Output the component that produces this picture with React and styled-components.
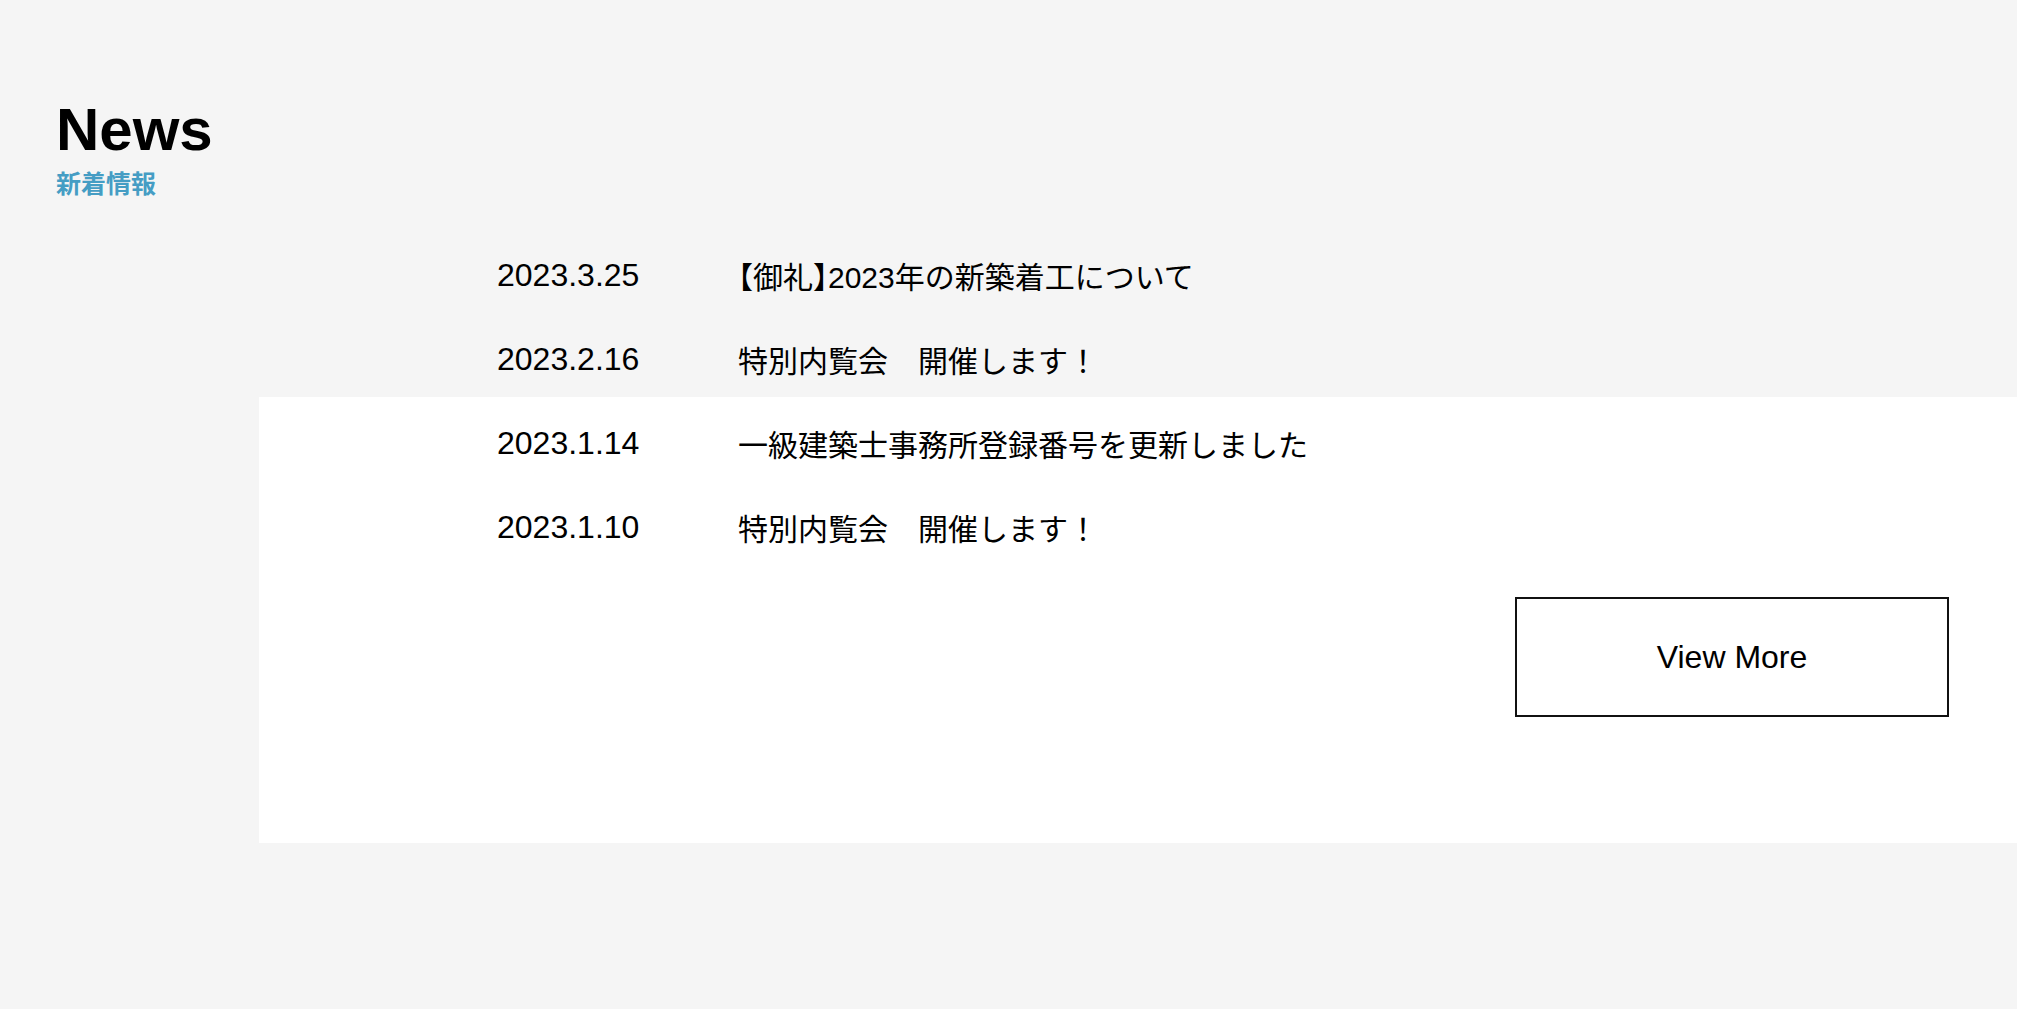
import React from "react";
import styled, { createGlobalStyle } from "styled-components";

const GlobalStyle = createGlobalStyle`
  * { box-sizing: border-box; }
  html, body { margin: 0; padding: 0; }
  body {
    background: #f5f5f5;
    color: #000;
    font-family: "Liberation Sans", Arial, "Noto Sans CJK JP", sans-serif;
  }
`;

const Page = styled.main`
  min-height: 1009px;
  background: #f5f5f5;
  padding-top: 100px;
`;

const Header = styled.header`
  padding-left: 56px;
  display: flex;
  flex-direction: column;
  gap: 7px;
`;

const Title = styled.h1`
  margin: 0;
  font-family: "Liberation Sans", Arial, sans-serif;
  font-weight: 700;
  font-size: 60px;
  line-height: 60px;
  color: #000;
`;

const Subtitle = styled.p`
  margin: 0;
  font-family: "Noto Sans CJK JP", sans-serif;
  font-weight: 700;
  font-size: 25px;
  line-height: 30px;
  color: #459dc4;
`;

const List = styled.ul`
  list-style: none;
  margin: 0;
  padding: ${(p) => p.$top || 0}px 0 0 ${(p) => p.$indent}px;
`;

const Row = styled.li`
  display: grid;
  grid-template-columns: 241px 1fr;
  align-items: center;
  height: 84px;
`;

const DateText = styled.time`
  font-family: "Liberation Sans", Arial, sans-serif;
  font-size: 32px;
`;

const Headline = styled.span`
  font-family: "Liberation Sans", Arial, "Noto Sans CJK JP", sans-serif;
  font-size: 30px;
`;

const Bracket = styled.span`
  font-family: "Noto Sans CJK JP", sans-serif;
  font-feature-settings: "halt";
`;

const Panel = styled.section`
  margin-top: ${(p) => p.$gap}px;
  margin-left: 259px;
  background: #fff;
  padding: 4px 68px 126px 238px;
  display: flex;
  flex-direction: column;
`;

const Actions = styled.div`
  display: flex;
  justify-content: flex-end;
  margin-top: 28px;
`;

const MoreButton = styled.a`
  width: 434px;
  height: 120px;
  border: 2px solid #111;
  background: #fff;
  display: flex;
  align-items: center;
  justify-content: center;
  font-family: "Liberation Sans", Arial, sans-serif;
  font-size: 32px;
  color: #000;
  text-decoration: none;
`;

const renderTitle = (t) => {
  const parts = t.split(/(【|】)/);
  return parts.map((p, i) =>
    p === "【" || p === "】" ? (
      <Bracket key={i}>{p}</Bracket>
    ) : (
      <React.Fragment key={i}>{p}</React.Fragment>
    )
  );
};

const top = [
  { date: "2023.3.25", title: "【御礼】2023年の新築着工について" },
  { date: "2023.2.16", title: "特別内覧会　開催します！" },
];
const bottom = [
  { date: "2023.1.14", title: "一級建築士事務所登録番号を更新しました" },
  { date: "2023.1.10", title: "特別内覧会　開催します！" },
];

export default function App() {
  return (
    <>
      <GlobalStyle />
      <Page>
        <Header>
          <Title>News</Title>
          <Subtitle>新着情報</Subtitle>
        </Header>
        <List $indent={497} $top={36}>
          {top.map((n) => (
            <Row key={n.date}>
              <DateText>{n.date}</DateText>
              <Headline>{renderTitle(n.title)}</Headline>
            </Row>
          ))}
        </List>
        <Panel $gap={-4}>
          <List $indent={0}>
            {bottom.map((n) => (
              <Row key={n.date}>
                <DateText>{n.date}</DateText>
                <Headline>{renderTitle(n.title)}</Headline>
              </Row>
            ))}
          </List>
          <Actions>
            <MoreButton href="#">View More</MoreButton>
          </Actions>
        </Panel>
      </Page>
    </>
  );
}
